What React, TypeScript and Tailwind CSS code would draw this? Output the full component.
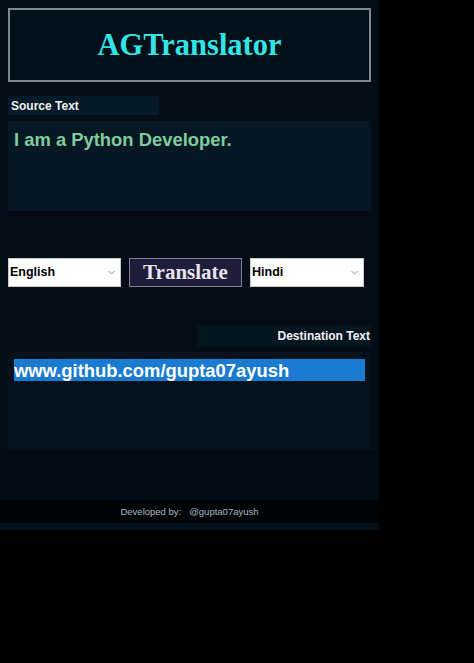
export default function App() {
  return (
    <div className="min-h-[663px] w-full bg-black font-['Liberation_Sans',Arial,sans-serif]">
      <div className="flex w-[379px] flex-col bg-[#040d15]">
        {/* header */}
        <div className="px-[8px] pt-[8px]">
          <div className="flex h-[74px] items-center justify-center border-2 border-[#7b888f] bg-[#03101a]">
            <h1 className="font-['Liberation_Serif','Times_New_Roman',serif] text-[30.5px] font-bold leading-none text-[#32e4e4]">
              AGTranslator
            </h1>
          </div>
        </div>

        {/* source */}
        <div className="mt-[14px] px-[8px]">
          <div className="flex h-[19px] w-[151px] items-center bg-[#071a27] pl-[3px] text-[12px] font-bold text-[#eef2f4]">
            Source Text
          </div>
          <div className="mt-[6px] h-[90px] bg-[#051824] px-[6px] pt-[8px] text-[18.4px] font-bold leading-[22px] text-[#7fcc9c]">
            I am a Python Developer.
          </div>
        </div>

        {/* controls */}
        <div className="mt-[47px] flex h-[29px] items-stretch gap-[8px] px-[8px]">
          <Select label="English" width="w-[113px]" />
          <button className="flex w-[113px] items-center justify-center border border-[#7f7f95] bg-[#1f1e3a] font-['Liberation_Serif','Times_New_Roman',serif] text-[21px] font-bold leading-none text-[#e8e4ee]">
            Translate
          </button>
          <Select label="Hindi" width="w-[114px]" />
        </div>

        {/* destination */}
        <div className="mt-[39px] px-[8px]">
          <div className="ml-auto flex h-[20px] w-[174px] items-center justify-end bg-[#061620] pr-[1px] text-[12px] font-bold text-[#eef2f4]">
            Destination Text
          </div>
          <div className="mt-[6px] h-[98px] bg-[#05121c] px-[6px] pt-[7px]">
            <div className="h-[22px] w-[351px] bg-[#1b7bd0] text-[18.4px] font-bold leading-[23px] text-white">
              www.github.com/gupta07ayush
            </div>
          </div>
        </div>

        <div className="h-[50px] bg-[#030b12]" />

        {/* footer */}
        <div className="flex h-[23px] items-center justify-center gap-[8px] bg-[#010407] pt-[1px] text-[9.5px] text-[#a9b5bf]">
          <span>Developed by:</span>
          <span>@gupta07ayush</span>
        </div>
        <div className="h-[7px] bg-[#04111a]" />
      </div>
    </div>
  );
}

function Select({ label, width }: { label: string; width: string }) {
  return (
    <div className={`${width} flex items-center justify-between border border-[#c9c9c9] bg-white pl-[1px] pr-[5px]`}>
      <span className="text-[12.5px] font-bold text-black">{label}</span>
      <svg width="7" height="5" viewBox="0 0 7 5" fill="none">
        <path d="M0.5 1 L3.5 4 L6.5 1" stroke="#8a8a8a" strokeWidth="1" />
      </svg>
    </div>
  );
}
